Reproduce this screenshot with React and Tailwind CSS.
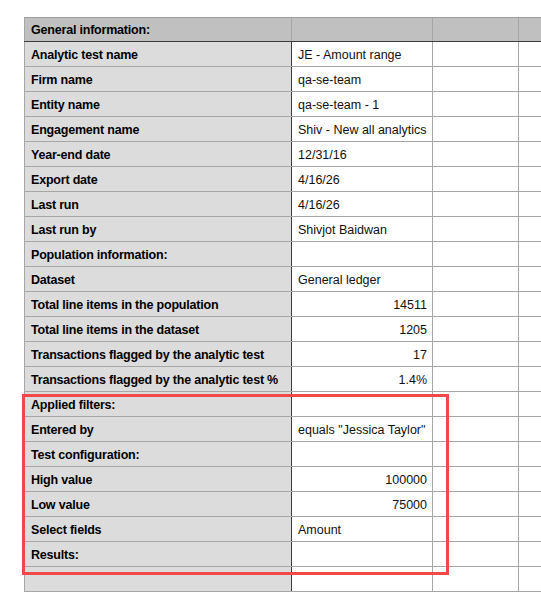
import React from "react";

const rows = [
  { label: "Analytic test name", value: "JE - Amount range" },
  { label: "Firm name", value: "qa-se-team" },
  { label: "Entity name", value: "qa-se-team - 1" },
  { label: "Engagement name", value: "Shiv - New all analytics" },
  { label: "Year-end date", value: "12/31/16" },
  { label: "Export date", value: "4/16/26" },
  { label: "Last run", value: "4/16/26" },
  { label: "Last run by", value: "Shivjot Baidwan" },
  { label: "Population information:", value: "" },
  { label: "Dataset", value: "General ledger" },
  { label: "Total line items in the population", value: "14511", num: true },
  { label: "Total line items in the dataset", value: "1205", num: true },
  { label: "Transactions flagged by the analytic test", value: "17", num: true },
  { label: "Transactions flagged by the analytic test %", value: "1.4%", num: true },
  { label: "Applied filters:", value: "" },
  { label: "Entered by", value: 'equals "Jessica Taylor"' },
  { label: "Test configuration:", value: "" },
  { label: "High value", value: "100000", num: true },
  { label: "Low value", value: "75000", num: true },
  { label: "Select fields", value: "Amount" },
  { label: "Results:", value: "" },
  { label: "", value: "" },
];

const Row = ({ label, value, num }) => (
  <div className="flex h-[25px] border-b border-[#a6a6a6]">
    <div className="w-[268px] shrink-0 flex items-center pt-[2px] pl-[6px] bg-[#dcdcdc] border-l border-[#a6a6a6] border-r border-r-[#3c3c3c] font-bold tracking-[-0.2px] text-black whitespace-nowrap overflow-hidden">
      {label}
    </div>
    <div
      className={
        "w-[141px] shrink-0 flex items-center pt-[2px] border-r border-[#a6a6a6] bg-white whitespace-nowrap overflow-hidden " +
        (num ? "justify-end pr-[5px]" : "pl-[6px]")
      }
    >
      {value}
    </div>
    <div className="w-[86px] shrink-0 border-r border-[#a6a6a6] bg-white" />
    <div className="w-[60px] shrink-0 border-r border-[#a6a6a6] bg-white" />
  </div>
);

export default function App() {
  return (
    <div
      className="relative w-[541px] h-[595px] overflow-hidden bg-white text-[12.5px] text-[#111]"
      style={{ fontFamily: '"Liberation Sans", Arial, Helvetica, sans-serif' }}
    >
      <div className="pt-[17px] pl-[24px]">
        <div className="w-[560px]">
          {/* header */}
          <div className="flex h-[25px] border-t border-[#9e9e9e] border-b border-b-[#3c3c3c] bg-[#bfc0bf]">
            <div className="w-[268px] shrink-0 flex items-center pt-[2px] pl-[6px] border-l border-[#a6a6a6] border-r border-r-[#a6a6a6] font-bold tracking-[-0.2px] text-black whitespace-nowrap">
              General information:
            </div>
            <div className="w-[141px] shrink-0 border-r border-[#a6a6a6]" />
            <div className="w-[86px] shrink-0 border-r border-[#a6a6a6]" />
            <div className="w-[60px] shrink-0 border-r border-[#a6a6a6]" />
          </div>
          {rows.map((r, i) => (
            <Row key={i} {...r} />
          ))}
        </div>
      </div>
      {/* highlight box */}
      <div className="absolute left-[22px] top-[394px] w-[427px] h-[181px] border-[3px] border-[#f34848] pointer-events-none" />
    </div>
  );
}
